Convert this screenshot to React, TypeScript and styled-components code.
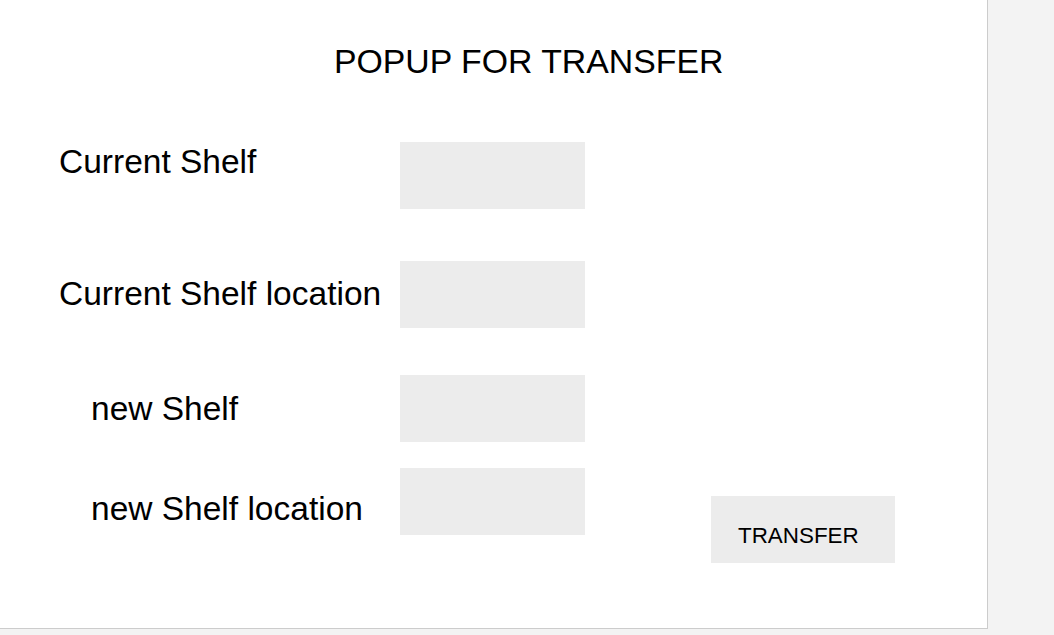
import React from 'react';
import styled, { createGlobalStyle } from 'styled-components';

const GlobalStyle = createGlobalStyle`
  body {
    margin: 0;
    background-color: #f3f3f3;
    font-family: 'Liberation Sans', Arial, sans-serif;
    color: #000;
  }
`;

const Panel = styled.div`
  box-sizing: border-box;
  width: 988px;
  height: 629px;
  padding-top: 41.5px;
  background-color: #fff;
  border-right: 1px solid #cccccc;
  border-bottom: 1px solid #cccccc;
`;

const Title = styled.h1`
  margin: 0 0 0 334px;
  font-size: 33.8px;
  font-weight: normal;
  line-height: 38px;
  white-space: nowrap;
`;

const Row = styled.div<{ $top: number }>`
  display: flex;
  align-items: flex-start;
  padding-left: 59px;
  margin-top: ${(p) => p.$top}px;
`;

const Label = styled.label<{ $indent?: number; $offset?: number }>`
  box-sizing: border-box;
  width: 341px;
  padding-left: ${(p) => p.$indent || 0}px;
  padding-top: ${(p) => p.$offset || 0}px;
  font-size: 33.5px;
  line-height: 38px;
  white-space: nowrap;
`;

const Field = styled.input`
  box-sizing: border-box;
  width: 185px;
  height: 67px;
  padding: 0 10px;
  border: none;
  outline: none;
  background-color: #ececec;
  font-family: inherit;
  font-size: 20px;
`;

const TransferBtn = styled.button`
  box-sizing: border-box;
  width: 184px;
  height: 67px;
  margin-left: 126px;
  margin-top: 28px;
  padding: 27px 0 14px 27px;
  border: none;
  background-color: #ececec;
  color: #000;
  font-family: inherit;
  font-size: 22.4px;
  line-height: normal;
  text-align: left;
  cursor: pointer;
`;

const rows = [
  { label: 'Current Shelf', top: 62.5, indent: 0, offset: 1 },
  { label: 'Current Shelf location', top: 52, indent: 0, offset: 14 },
  { label: 'new Shelf', top: 47, indent: 32, offset: 15 },
  { label: 'new Shelf location', top: 26, indent: 32, offset: 22 },
];

const App = () => {
  return (
    <>
      <GlobalStyle />
      <Panel>
        <Title>POPUP FOR TRANSFER</Title>
        {rows.map((row, i) => (
          <Row key={row.label} $top={row.top}>
            <Label $indent={row.indent} $offset={row.offset}>{row.label}</Label>
            <Field type='text' />
            {i === rows.length - 1 && <TransferBtn>TRANSFER</TransferBtn>}
          </Row>
        ))}
      </Panel>
    </>
  );
};

export default App;
